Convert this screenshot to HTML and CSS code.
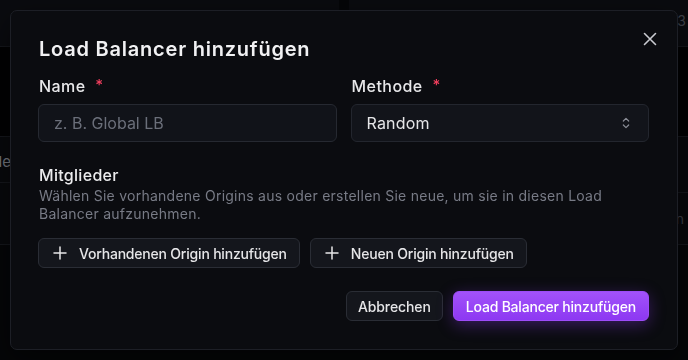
FILE: index.html
```html
<!DOCTYPE html>
<html lang="de">
<head>
<meta charset="utf-8">
<title>Load Balancer hinzufügen</title>
<link rel="stylesheet" href="styles.css">
</head>
<body>
<div class="page">
  <div class="bg-top">
    <div class="bg-card"></div>
    <div class="bg-card bg-card-right"><span class="bg-num">3</span></div>
  </div>
  <div class="bg-gap"></div>
  <div class="bg-table">
    <div class="bg-col">
      <div class="bg-row bg-row-a"><span class="bg-cell-text bright">Methode</span></div>
      <div class="bg-row bg-row-b"><span class="bg-cell-text">Origin</span></div>
    </div>
    <div class="bg-col">
      <div class="bg-row bg-row-c"></div>
      <div class="bg-row bg-row-d"><span class="bg-cell-text right">n .</span></div>
    </div>
  </div>
</div>

<div class="overlay">
  <div class="modal" role="dialog" aria-labelledby="dlg-title">
    <button class="close" aria-label="Schließen">
      <svg width="14" height="14" viewBox="0 0 14 14" fill="none" stroke="currentColor" stroke-width="1.6" stroke-linecap="round"><path d="M1.5 1.5l11 11M12.5 1.5l-11 11"/></svg>
    </button>
    <h2 id="dlg-title" class="title">Load Balancer hinzufügen</h2>

    <div class="fields">
      <div class="field">
        <label class="label">Name <span class="req">*</span></label>
        <div class="input placeholder">z. B. Global LB</div>
      </div>
      <div class="field">
        <label class="label">Methode <span class="req">*</span></label>
        <div class="input select">
          <span>Random</span>
          <svg width="16" height="16" viewBox="0 0 24 24" fill="none" stroke="currentColor" stroke-width="1.8" stroke-linecap="round" stroke-linejoin="round"><path d="m8 15 4 4 4-4"/><path d="m8 9 4-4 4 4"/></svg>
        </div>
      </div>
    </div>

    <div class="members">
      <h3 class="section-title">Mitglieder</h3>
      <p class="desc">Wählen Sie vorhandene Origins aus oder erstellen Sie neue, um sie in diesen Load Balancer aufzunehmen.</p>
      <div class="member-actions">
        <button class="btn btn-outline btn-icon">
          <svg width="16" height="16" viewBox="0 0 16 16" fill="none" stroke="currentColor" stroke-width="1.5" stroke-linecap="round"><path d="M2 8h12M8 2v12"/></svg>
          Vorhandenen Origin hinzufügen
        </button>
        <button class="btn btn-outline btn-icon">
          <svg width="16" height="16" viewBox="0 0 16 16" fill="none" stroke="currentColor" stroke-width="1.5" stroke-linecap="round"><path d="M2 8h12M8 2v12"/></svg>
          Neuen Origin hinzufügen
        </button>
      </div>
    </div>

    <div class="footer">
      <button class="btn btn-outline btn-cancel">Abbrechen</button>
      <button class="btn btn-primary">Load Balancer hinzufügen</button>
    </div>
  </div>
</div>
</body>
</html>
```

FILE: styles.css
```css
* { box-sizing: border-box; }

html, body {
  margin: 0;
  padding: 0;
}

body {
  width: 688px;
  height: 360px;
  overflow: hidden;
  background: #050608;
  font-family: Inter, "Noto Sans", sans-serif;
  color: #e8e8ea;
}

/* background page (dimmed) */
.page {
  width: 688px;
  height: 360px;
  display: flex;
  flex-direction: column;
}

.bg-top {
  display: flex;
  gap: 10px;
  height: 47px;
}

.bg-card {
  flex: 1;
  background: #0a0b0f;
  border-bottom: 1px solid #15171c;
  display: flex;
  justify-content: flex-end;
  align-items: center;
  padding-right: 2px;
}

.bg-num {
  font-size: 14px;
  color: #3f424a;
  margin-top: -6px;
}

.bg-gap {
  height: 89px;
  background: #020203;
}

.bg-table {
  display: flex;
  background: #08090c;
}

.bg-col {
  flex: 1;
  display: flex;
  flex-direction: column;
}

.bg-row {
  border-top: 1px solid #15171c;
  display: flex;
  align-items: center;
  overflow: hidden;
}

.bg-row-a { height: 46px; padding-top: 4px; }
.bg-row-b { height: 63px; border-bottom: 1px solid #15171c; }
.bg-col:first-child .bg-row { width: 100%; justify-content: flex-start; }
.bg-row-c { height: 56px; }
.bg-row-d { height: 53px; border-bottom: 1px solid #15171c; justify-content: flex-end; }

.bg-cell-text {
  font-size: 14px;
  color: #3c3f47;
  white-space: nowrap;
  margin-left: -58px;
}
.bg-cell-text.bright { color: #74777f; font-size: 15px; margin-left: -52px; }
.bg-cell-text.right { margin-left: 0; margin-right: -4px; }

/* modal */
.overlay {
  position: fixed;
  inset: 0;
  display: flex;
  align-items: center;
  justify-content: center;
}

.modal {
  position: relative;
  width: 668px;
  height: 340px;
  background: #0b0c10;
  border: 1px solid #1d1f26;
  border-radius: 7px;
  padding: 24px 28px 28px 27px;
  display: flex;
  flex-direction: column;
  box-shadow: 0 10px 30px rgba(0, 0, 0, 0.5);
}

.close {
  position: absolute;
  top: 20px;
  right: 19px;
  width: 16px;
  height: 16px;
  padding: 1px;
  border: 0;
  background: none;
  color: #c9cad0;
  display: flex;
  align-items: center;
  justify-content: center;
}

.title {
  margin: 0 0 0 1px;
  font-size: 20px;
  line-height: 28px;
  font-weight: 600;
  color: #f1f1f3;
  letter-spacing: 0.78px;
}

.fields {
  display: flex;
  gap: 14px;
  margin-top: 11px;
}

.field {
  flex: 1;
  display: flex;
  flex-direction: column;
  gap: 5px;
}

.label {
  font-size: 16px;
  line-height: 24px;
  font-weight: 500;
  color: #e8e8ea;
  letter-spacing: 0.45px;
  padding-left: 1px;
}

.req {
  color: #f43f5e;
  margin-left: 5px;
  font-size: 15px;
  position: relative;
  top: -2px;
}

.input {
  height: 38px;
  border: 1px solid #23262e;
  background: #12141a;
  border-radius: 6px;
  padding: 0 15px;
  display: flex;
  align-items: center;
  font-size: 16px;
}

.placeholder {
  color: #6b6f7a;
  background: #111319;
  border-color: #262931;
}

.select {
  justify-content: space-between;
  color: #e6e6e8;
  padding-right: 14px;
  letter-spacing: 0.2px;
}

.select svg {
  color: #8a8d96;
}

.members {
  margin-top: 21px;
  display: flex;
  flex-direction: column;
}

.section-title {
  margin: 0;
  font-size: 16px;
  line-height: 24px;
  font-weight: 500;
  color: #ececee;
  letter-spacing: 0.3px;
  padding-left: 1px;
}

.desc {
  margin: 0;
  font-size: 14px;
  line-height: 18px;
  color: #787b86;
  letter-spacing: 0.25px;
  padding-left: 1px;
}

.member-actions {
  display: flex;
  gap: 10px;
  margin-top: 15px;
}

.btn {
  height: 30px;
  border-radius: 6px;
  font-family: inherit;
  font-size: 14px;
  font-weight: 500;
  letter-spacing: -0.2px;
  padding: 0 12px;
  display: flex;
  align-items: center;
  white-space: nowrap;
  cursor: pointer;
}

.btn-outline {
  background: #14161c;
  border: 1px solid #2a2d35;
  color: #e6e6e8;
}

.btn-icon {
  padding-left: 13px;
  gap: 11px;
}

.btn-cancel {
  letter-spacing: -0.1px;
  padding: 0 11px;
}

.footer {
  margin-top: 23px;
  display: flex;
  justify-content: flex-end;
  gap: 10px;
}

.btn-primary {
  border: 1px solid #9d4cf8;
  background: linear-gradient(180deg, #a252fa 0%, #8d38f2 100%);
  color: #ffffff;
  box-shadow: 0 4px 16px rgba(139, 56, 242, 0.35);
}
```
